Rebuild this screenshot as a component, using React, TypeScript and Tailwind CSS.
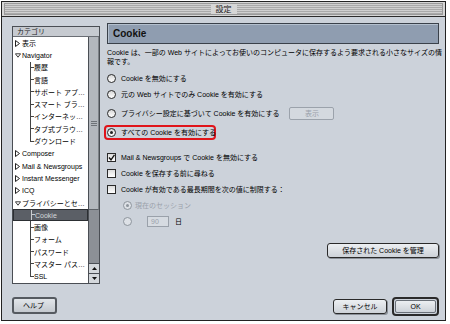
import React from "react";

type Node = { t: string; k: "closed" | "open" | "child" | "last"; sel?: boolean };

const tree: Node[] = [
  { t: "表示", k: "closed" },
  { t: "Navigator", k: "open" },
  { t: "履歴", k: "child" },
  { t: "言語", k: "child" },
  { t: "サポート アプ…", k: "child" },
  { t: "スマート ブラ…", k: "child" },
  { t: "インターネッ…", k: "child" },
  { t: "タブ式ブラウ…", k: "child" },
  { t: "ダウンロード", k: "last" },
  { t: "Composer", k: "closed" },
  { t: "Mail & Newsgroups", k: "closed" },
  { t: "Instant Messenger", k: "closed" },
  { t: "ICQ", k: "closed" },
  { t: "プライバシーとセ…", k: "open" },
  { t: "Cookie", k: "child", sel: true },
  { t: "画像", k: "child" },
  { t: "フォーム", k: "child" },
  { t: "パスワード", k: "child" },
  { t: "マスター パス…", k: "child" },
  { t: "SSL", k: "last" },
];

function TreeRow({ n }: { n: Node }) {
  const row = n.sel
    ? "h-[12.3px] flex items-center bg-[#5b5f66] border border-[#2c2f33] text-[#d4d8dc]"
    : "h-[12.3px] flex items-center text-[#000]";
  if (n.k === "closed" || n.k === "open") {
    return (
      <div className={row}>
        <div className="w-[8px] pl-[2px] flex items-center">
          {n.k === "closed" ? (
            <svg width="5" height="7" viewBox="0 0 5 7">
              <polygon points="0.5,0.5 4.5,3.5 0.5,6.5" fill="#fff" stroke="#222" strokeWidth="1" />
            </svg>
          ) : (
            <svg width="7" height="5" viewBox="0 0 7 5">
              <polygon points="0.5,0.5 6.5,0.5 3.5,4.5" fill="#fff" stroke="#222" strokeWidth="1" />
            </svg>
          )}
        </div>
        <span className="ml-[1px] whitespace-nowrap">{n.t}</span>
      </div>
    );
  }
  const lineCol = n.sel ? "border-[#c8ccd0]" : "border-[#444]";
  return (
    <div className={row}>
      <div className="w-[17px] shrink-0" />
      <div className="w-[4px] h-full flex flex-col shrink-0">
        <div className={`h-1/2 border-l border-b ${lineCol}`} />
        {n.k === "child" ? <div className={`h-1/2 border-l ${lineCol}`} /> : <div className="h-1/2" />}
      </div>
      <span className="whitespace-nowrap">{n.t}</span>
    </div>
  );
}

function Radio({ on, dis }: { on?: boolean; dis?: boolean }) {
  return (
    <span
      className={
        dis
          ? "w-[9px] h-[9px] rounded-full border border-[#8d949c] bg-[#dde1e6] flex items-center justify-center shrink-0"
          : "w-[9px] h-[9px] rounded-full border border-[#2a2a2a] bg-[linear-gradient(#d8d8d8,#ffffff)] flex items-center justify-center shrink-0"
      }
    >
      {on ? (
        <span className={dis ? "w-[3px] h-[3px] rounded-full bg-[#8d949c]" : "w-[3px] h-[3px] rounded-full bg-[#222]"} />
      ) : null}
    </span>
  );
}

function Check({ on }: { on?: boolean }) {
  return (
    <span className="w-[9px] h-[9px] border border-[#2a2a2a] bg-[linear-gradient(#dcdcdc,#ffffff)] flex items-center justify-center shrink-0">
      {on ? (
        <svg width="7" height="7" viewBox="0 0 7 7">
          <path d="M1 3.5 L3 5.8 L6.5 0.8" fill="none" stroke="#111" strokeWidth="1.4" />
        </svg>
      ) : null}
    </span>
  );
}

export default function App() {
  return (
    <div className="w-[450px] h-[324px] bg-white pt-[1px] pl-[1px] font-['Liberation_Sans','Noto_Sans_CJK_JP',sans-serif] text-[7px] leading-[9px] text-[#000] whitespace-nowrap">
      <div className="w-[445px] h-[320px] border border-[#222] bg-[#ccd2da] flex flex-col">
        {/* title bar */}
        <div className="h-[15px] border-b border-[#2a2a2a] bg-[#d6d6d6] px-[2px] py-[1px] shrink-0">
          <div className="h-full border border-[#9a9a9a] bg-[repeating-linear-gradient(to_bottom,#cfcfcf_0px,#cfcfcf_1px,#a9a9a9_1px,#a9a9a9_2px)] flex justify-center">
            <div className="px-[5px] bg-[#d6d6d6] text-[8px] leading-[11px] text-[#222]">設定</div>
          </div>
        </div>

        {/* body */}
        <div className="flex-1 flex flex-col pl-[10px] pr-[6px]">
          <div className="h-[267px] pt-[6px] flex gap-[7px]">
            {/* category list */}
            <div className="w-[88px] h-[258px] mt-[3px] border border-[#4a4e54] bg-white flex flex-col shrink-0">
              <div className="h-[10px] border-b border-[#6a6e74] bg-[#c6cad0] pl-[4px] leading-[9px] text-[#222] shrink-0">
                カテゴリ
              </div>
              <div className="flex-1 flex overflow-hidden">
                <div className="flex-1 flex flex-col overflow-hidden">
                  {tree.map((n, i) => (
                    <TreeRow key={i} n={n} />
                  ))}
                </div>
                <div className="w-[11px] border-l border-[#4a4e54] flex flex-col shrink-0">
                  <div className="h-[173px] bg-[#b3b7bd] border-b border-[#5e6268] border-r border-r-[#7e8288] flex flex-col items-center justify-center gap-[1px]">
                    <div className="w-[6px] h-[1px] bg-[#6e7278]" />
                    <div className="w-[6px] h-[1px] bg-[#6e7278]" />
                    <div className="w-[6px] h-[1px] bg-[#6e7278]" />
                  </div>
                  <div className="flex-1 bg-[#8c9096]" />
                  <div className="h-[10px] border-t border-[#4a4e54] bg-[#d4d8dc] flex items-center justify-center">
                    <svg width="5" height="3" viewBox="0 0 5 3">
                      <polygon points="0,3 2.5,0 5,3" fill="#111" />
                    </svg>
                  </div>
                  <div className="h-[10px] border-t border-[#4a4e54] bg-[#d4d8dc] flex items-center justify-center">
                    <svg width="5" height="3" viewBox="0 0 5 3">
                      <polygon points="0,0 5,0 2.5,3" fill="#111" />
                    </svg>
                  </div>
                </div>
              </div>
            </div>

            {/* right panel */}
            <div className="w-[332px] flex flex-col">
              <div className="h-[21px] border border-[#3a414a] bg-[#8f9db0] shadow-[inset_1px_1px_0_#b4c0ce] flex items-center pl-[5px] shrink-0">
                <span className="text-[10px] font-bold leading-[12px] text-[#111]">Cookie</span>
              </div>
              <div className="mt-[4px] leading-[9px]">
                Cookie は、一部の Web サイトによってお使いのコンピュータに保存するよう要求される小さなサイズの情
                <br />
                報です。
              </div>

              <div className="mt-[4px] h-[16px] flex items-center gap-[5px]">
                <Radio />
                <span>Cookie を無効にする</span>
              </div>
              <div className="h-[16px] flex items-center gap-[5px]">
                <Radio />
                <span>元の Web サイトでのみ Cookie を有効にする</span>
              </div>
              <div className="mt-[3px] h-[16px] flex items-center">
                <Radio />
                <span className="ml-[5px]">プライバシー設定に基づいて Cookie を有効にする</span>
                <div className="ml-[10px] w-[45px] h-[13px] rounded-[2px] border border-[#9ba2ab] bg-[#d4d9df] text-[#9aa1aa] flex items-center justify-center">
                  表示
                </div>
              </div>
              <div className="mt-[4px] -ml-[3px] w-[112px] h-[15px] border-2 border-[#e0141a] rounded-[4px] pl-[1px] flex items-center gap-[5px]">
                <Radio on />
                <span>すべての Cookie を有効にする</span>
              </div>

              <div className="mt-[9px] h-[16px] flex items-center gap-[5px]">
                <Check on />
                <span>Mail &amp; Newsgroups で Cookie を無効にする</span>
              </div>
              <div className="h-[16px] flex items-center gap-[5px]">
                <Check />
                <span>Cookie を保存する前に尋ねる</span>
              </div>
              <div className="h-[16px] flex items-center gap-[5px]">
                <Check />
                <span>Cookie が有効である最長期間を次の値に制限する：</span>
              </div>
              <div className="h-[16px] pl-[16px] flex items-center gap-[3px] text-[#9aa1aa]">
                <Radio on dis />
                <span>現在のセッション</span>
              </div>
              <div className="h-[16px] pl-[16px] flex items-center">
                <Radio dis />
                <div className="ml-[15px] w-[22px] h-[11px] border border-[#9aa1aa] bg-[#d6dbe1] text-[#9aa1aa] pl-[3px] leading-[9px]">
                  90
                </div>
                <span className="ml-[6px]">日</span>
              </div>

              <div className="mt-[14px] self-end w-[112px] h-[15px] rounded-[3px] border border-[#2a2a2a] bg-[linear-gradient(#eceff2,#cdd2d8)] shadow-[1px_1px_0_#8a9098] flex items-center justify-center">
                保存された Cookie を管理
              </div>
            </div>
          </div>

          {/* bottom buttons */}
          <div className="mt-[13px] flex items-start">
            <div className="w-[45px] h-[17px] rounded-[3px] border-2 border-[#555a60] bg-[linear-gradient(#e2e6ea,#c4c9cf)] flex items-center pl-[9px]">
              ヘルプ
            </div>
            <div className="flex-1" />
            <div className="mt-[2px] w-[54px] h-[15px] rounded-[3px] border border-[#2a2a2a] bg-[linear-gradient(#eceff2,#cdd2d8)] shadow-[1px_1px_0_#8a9098] flex items-center justify-center">
              キャンセル
            </div>
            <div className="ml-[5px] w-[47px] h-[19px] rounded-[4px] border-2 border-[#2a2a2a] p-[1px]">
              <div className="w-full h-full rounded-[2px] border border-[#6a7078] bg-[linear-gradient(#eceff2,#cdd2d8)] flex items-center justify-center">
                OK
              </div>
            </div>
          </div>
        </div>
      </div>
    </div>
  );
}
